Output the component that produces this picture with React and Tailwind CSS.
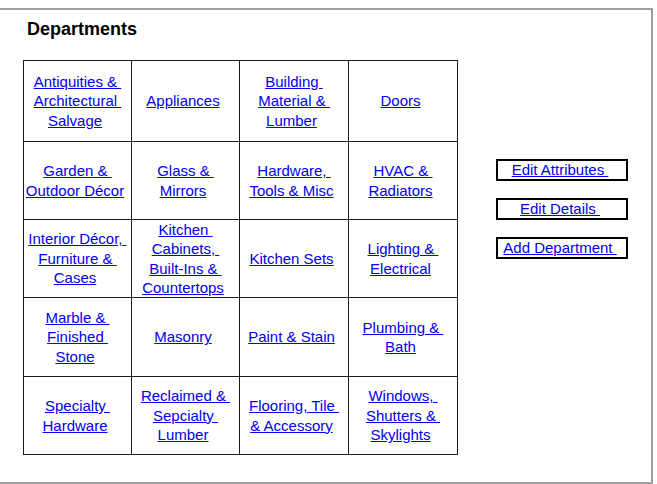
import React from "react";

const rows = [
  [
    ["Antiquities &\u00a0", "Architectural\u00a0", "Salvage"],
    ["Appliances"],
    ["Building\u00a0", "Material &\u00a0", "Lumber"],
    ["Doors"],
  ],
  [
    ["Garden &\u00a0", "Outdoor Décor"],
    ["Glass &\u00a0", "Mirrors"],
    ["Hardware,\u00a0", "Tools & Misc"],
    ["HVAC &\u00a0", "Radiators"],
  ],
  [
    ["Interior Décor,\u00a0", "Furniture &\u00a0", "Cases"],
    ["Kitchen\u00a0", "Cabinets,\u00a0", "Built-Ins &\u00a0", "Countertops"],
    ["Kitchen Sets"],
    ["Lighting &\u00a0", "Electrical"],
  ],
  [
    ["Marble &\u00a0", "Finished\u00a0", "Stone"],
    ["Masonry"],
    ["Paint & Stain"],
    ["Plumbing &\u00a0", "Bath"],
  ],
  [
    ["Specialty\u00a0", "Hardware"],
    ["Reclaimed &\u00a0", "Sepcialty\u00a0", "Lumber"],
    ["Flooring, Tile\u00a0", "& Accessory"],
    ["Windows,\u00a0", "Shutters &\u00a0", "Skylights"],
  ],
];

const actions = ["Edit Attributes\u00a0", "Edit Details\u00a0", "Add Department\u00a0"];

function Cell({ lines }) {
  return (
    <div className="flex items-center justify-center border-r border-b border-[#1c1c1c] text-center">
      <a href="#" className="flex flex-col items-center text-[#0000ee] underline leading-[19.5px]">
        {lines.map((l, i) => (
          <span
            key={i}
            className={l.endsWith("\u00a0") ? "whitespace-pre" : "whitespace-pre pr-[5px]"}
          >
            {l}
          </span>
        ))}
      </a>
    </div>
  );
}

export default function App() {
  return (
    <div
      className="bg-white w-[657px] h-[484px] pt-[8px] text-[15px]"
      style={{ fontFamily: '"Liberation Sans", Arial, sans-serif' }}
    >
      <div className="box-border w-[653px] h-[476px] border-t-2 border-r-2 border-b-2 border-[#a0a0a0] flex items-start pl-[23px] pt-[9px]">
        <div className="flex flex-col">
          <h1 className="pl-[4px] text-[18px] leading-[21px] font-bold text-black">Departments</h1>
          <div className="mt-[20px] grid grid-cols-[108px_108px_109px_109px] grid-rows-[81px_78px_78px_79px_78px] border-l border-t border-[#1c1c1c] w-[435px]">
            {rows.flat().map((lines, i) => (
              <Cell key={i} lines={lines} />
            ))}
          </div>
        </div>
        <div className="ml-[38px] mt-[140px] flex flex-col gap-[17px]">
          {actions.map((a) => (
            <div
              key={a}
              className="box-border w-[132px] h-[22px] border-2 border-black flex items-center justify-center pr-[4px]"
            >
              <a href="#" className="text-[#0000ee] underline leading-[18px] whitespace-pre">
                {a}
              </a>
            </div>
          ))}
        </div>
      </div>
    </div>
  );
}
